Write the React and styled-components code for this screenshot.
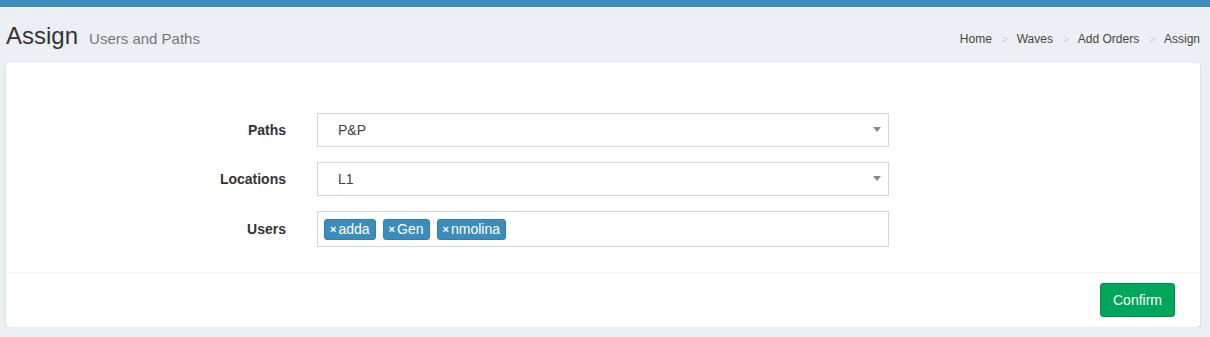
import React from 'react'
import styled, { createGlobalStyle } from 'styled-components'

const GlobalStyle = createGlobalStyle`
body{
    margin: 0;
    background: #ecf0f5;
    font-family: "Liberation Sans", Arial, sans-serif;
    color: #333;
}`

const TopBar = styled.div`
height: 7px;
background: #3c8dbc;`

const Header = styled.div`
display: flex;
align-items: center;
justify-content: space-between;
height: 56px;
padding: 2px 10px 0 6px;
box-sizing: border-box;`

const Title = styled.h1`
margin: 0;
font-size: 24px;
font-weight: normal;
color: #333;
small{
    font-size: 15px;
    color: #777;
    margin-left: 11px;
}`

const Crumbs = styled.ol`
display: flex;
list-style: none;
margin: 5px 0 0;
padding: 0;
font-size: 12px;
color: #444;`

const Crumb = styled.li`
& + &::before{
    content: ">";
    color: #ccc;
    font-size: 10px;
    padding: 0 9px 0 10px;
}`

const Box = styled.div`
margin: 0 10px 0 6px;
background: #fff;
border-radius: 3px;
box-shadow: 0 1px 2px rgba(0,0,0,.22);`

const BoxBody = styled.div`
padding: 50px 0 25px;
display: flex;
flex-direction: column;
gap: 15px;`

const Row = styled.div`
display: grid;
grid-template-columns: 280px 572px;
column-gap: 31px;
align-items: center;`

const Label = styled.label`
text-align: right;
font-size: 14px;
font-weight: bold;`

const Select = styled.div`
position: relative;
height: 34px;
border: 1px solid #d2d6de;
box-sizing: border-box;
padding: 0 20px;
display: flex;
align-items: center;
font-size: 14px;
color: #444;
&::after{
    content: "";
    position: absolute;
    right: 7px;
    top: 13px;
    border-left: 4px solid transparent;
    border-right: 4px solid transparent;
    border-top: 5px solid #888;
}`

const Multi = styled.div`
min-height: 36px;
border: 1px solid #d2d6de;
box-sizing: border-box;
padding: 0 6px;
display: flex;
align-items: center;
gap: 7px;`

const Tag = styled.span`
display: inline-flex;
align-items: center;
height: 21px;
padding: 0 5px;
background: #3c8dbc;
border: 1px solid #367fa9;
border-radius: 3px;
color: #fff;
font-size: 14px;
box-sizing: border-box;
b{
    font-size: 11px;
    margin-right: 2px;
}`

const Footer = styled.div`
border-top: 1px solid #f4f4f4;
padding: 10px 25px 10px;
display: flex;
justify-content: flex-end;`

const Button = styled.button`
height: 34px;
padding: 0 12px;
background: #00a65a;
border: 1px solid #008d4c;
border-radius: 3px;
color: #fff;
font-family: inherit;
font-size: 14px;`

const users = ['adda', 'Gen', 'nmolina']

export default function App() {
    return (
        <div>
            <GlobalStyle />
            <TopBar />
            <Header>
                <Title>Assign<small>Users and Paths</small></Title>
                <Crumbs>
                    <Crumb>Home</Crumb>
                    <Crumb>Waves</Crumb>
                    <Crumb>Add Orders</Crumb>
                    <Crumb>Assign</Crumb>
                </Crumbs>
            </Header>
            <Box>
                <BoxBody>
                    <Row>
                        <Label>Paths</Label>
                        <Select>P&amp;P</Select>
                    </Row>
                    <Row>
                        <Label>Locations</Label>
                        <Select>L1</Select>
                    </Row>
                    <Row>
                        <Label>Users</Label>
                        <Multi>
                            {users.map(u => <Tag key={u}><b>×</b>{u}</Tag>)}
                        </Multi>
                    </Row>
                </BoxBody>
                <Footer>
                    <Button>Confirm</Button>
                </Footer>
            </Box>
        </div>
    )
}
